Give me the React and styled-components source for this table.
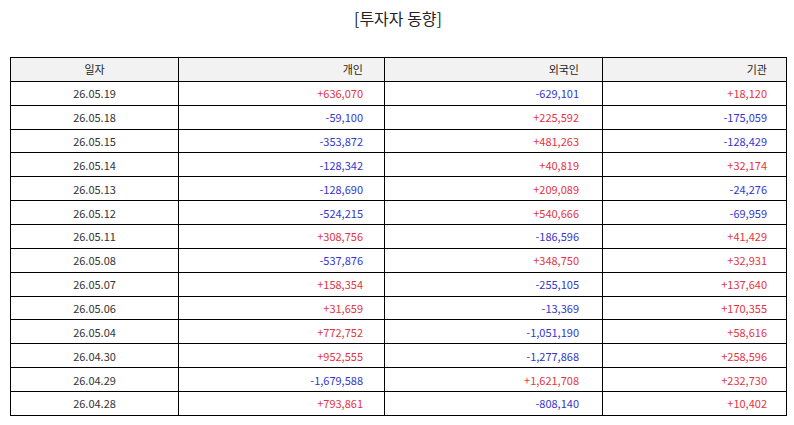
import React from "react";
import styled, { createGlobalStyle } from "styled-components";

const Global = createGlobalStyle`
  html, body { margin: 0; padding: 0; background: #fff; }
  body { font-family: "Noto Sans CJK KR", "Noto Sans", sans-serif; }
`;

const Page = styled.div`
  width: 794px;
  height: 425px;
  box-sizing: border-box;
  padding: 6px 8px 0 10px;
`;

const Title = styled.h1`
  margin: 0;
  height: 51px;
  text-align: center;
  font-size: 16px;
  font-weight: 400;
  color: #222;
  line-height: 24px;
`;

const Table = styled.table`
  width: 776px;
  border-collapse: collapse;
  table-layout: fixed;
  font-size: 11px;
  color: #333;
`;

const Row = styled.tr`
  height: 23.87px;
`;

const Cell = styled.td`
  border: 1px solid #000;
  padding: 0 ${(p) => p.$pad || 0}px 0 0;
  text-align: ${(p) => (p.$center ? "center" : "right")};
  color: ${(p) => (p.$tone === "up" ? "#e53340" : p.$tone === "down" ? "#3535cc" : "#333")};
  line-height: 14px;
  white-space: nowrap;
`;

const Head = styled(Cell).attrs({ as: "th" })`
  font-weight: 400;
  background: #f2f2f2;
  color: #222;
`;

const cols = [
  { w: 168, pad: 0 },
  { w: 206, pad: 21 },
  { w: 218, pad: 23 },
  { w: 184, pad: 19 },
];

const data = [
  ["26.05.19", "+636,070", "-629,101", "+18,120"],
  ["26.05.18", "-59,100", "+225,592", "-175,059"],
  ["26.05.15", "-353,872", "+481,263", "-128,429"],
  ["26.05.14", "-128,342", "+40,819", "+32,174"],
  ["26.05.13", "-128,690", "+209,089", "-24,276"],
  ["26.05.12", "-524,215", "+540,666", "-69,959"],
  ["26.05.11", "+308,756", "-186,596", "+41,429"],
  ["26.05.08", "-537,876", "+348,750", "+32,931"],
  ["26.05.07", "+158,354", "-255,105", "+137,640"],
  ["26.05.06", "+31,659", "-13,369", "+170,355"],
  ["26.05.04", "+772,752", "-1,051,190", "+58,616"],
  ["26.04.30", "+952,555", "-1,277,868", "+258,596"],
  ["26.04.29", "-1,679,588", "+1,621,708", "+232,730"],
  ["26.04.28", "+793,861", "-808,140", "+10,402"],
];

const tone = (v) => (v.startsWith("+") ? "up" : v.startsWith("-") ? "down" : undefined);

export default function App() {
  return (
    <>
      <Global />
      <Page>
        <Title>[투자자 동향]</Title>
        <Table>
          <colgroup>
            {cols.map((c, i) => (
              <col key={i} style={{ width: c.w }} />
            ))}
          </colgroup>
          <thead>
            <Row>
              <Head $center>일자</Head>
              <Head $pad={cols[1].pad}>개인</Head>
              <Head $pad={cols[2].pad}>외국인</Head>
              <Head $pad={cols[3].pad}>기관</Head>
            </Row>
          </thead>
          <tbody>
            {data.map((r) => (
              <Row key={r[0]}>
                <Cell $center>{r[0]}</Cell>
                {r.slice(1).map((v, i) => (
                  <Cell key={i} $pad={cols[i + 1].pad} $tone={tone(v)}>
                    {v}
                  </Cell>
                ))}
              </Row>
            ))}
          </tbody>
        </Table>
      </Page>
    </>
  );
}
